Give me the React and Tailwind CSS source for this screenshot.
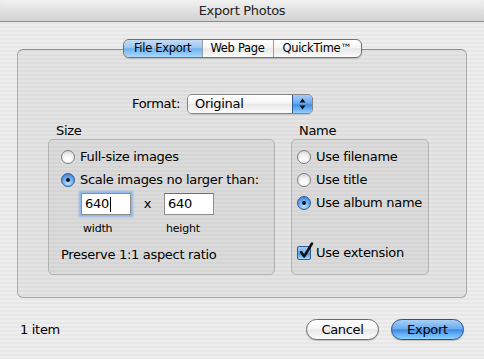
import React from 'react';

const STRIPES = 'bg-[image:repeating-linear-gradient(to_bottom,#eeeeee_0px,#eeeeee_2px,#e7e7e7_2px,#e7e7e7_4px)]';
const BLUE = 'bg-[image:linear-gradient(to_bottom,#c4dcf7_0%,#9cc7f3_45%,#6fb0ef_52%,#a9d9fd_100%)]';
const WHITE = 'bg-[image:linear-gradient(to_bottom,#ffffff_0%,#f6f6f6_45%,#e8e8e8_52%,#fbfbfb_100%)]';

function Radio({ on }) {
  return on ? (
    <span className="w-[14px] h-[14px] rounded-full border border-[#35588f] bg-[image:radial-gradient(circle_at_50%_75%,#bfe4ff_0%,#6fb0f0_45%,#2f74d0_100%)] flex items-center justify-center shrink-0">
      <span className="w-[4px] h-[4px] rounded-full bg-[#111]" />
    </span>
  ) : (
    <span className="w-[14px] h-[14px] rounded-full border border-[#7d7d7d] bg-[image:radial-gradient(circle_at_50%_75%,#ffffff_0%,#f4f4f4_45%,#c9c9c9_100%)] shrink-0" />
  );
}

function Checkbox() {
  return (
    <span className="relative w-[14px] h-[14px] rounded-[2px] border border-[#35588f] bg-[image:linear-gradient(to_bottom,#a8cdf5_0%,#6fb0ef_50%,#4f98e6_55%,#a9dcff_100%)] shrink-0">
      <svg className="absolute left-[1px] top-[-5px]" width="15" height="17" viewBox="0 0 15 17">
        <path d="M2 10 L5.2 14.5 L13 1.5" fill="none" stroke="#111" strokeWidth="2.5" strokeLinecap="round" strokeLinejoin="round" />
      </svg>
    </span>
  );
}

function Tab({ label, on, first, last }) {
  return (
    <div className={`h-full flex items-center justify-center text-[11.5px] tracking-[-0.3px] ${on ? BLUE : WHITE} ${first ? 'rounded-l-[6px]' : 'border-l border-[#9d9d9d]'} ${last ? 'rounded-r-[6px]' : ''}`}>
      {label}
    </div>
  );
}

function Row({ children, className = '' }) {
  return <div className={`h-[23px] flex items-center gap-[5px] ${className}`}>{children}</div>;
}

export default function App() {
  return (
    <div className={`w-[484px] h-[359px] overflow-hidden text-black font-['Lucida_Grande','DejaVu_Sans',sans-serif] text-[13px] tracking-[-0.3px] ${STRIPES}`}>
      {/* Title bar */}
      <div className="h-[22px] border-b border-[#8e8e8e] bg-[image:linear-gradient(to_bottom,#f1f1f1,#d2d2d2)] flex items-center justify-center text-[#222] rounded-t-[5px]">
        Export Photos
      </div>

      <div className="px-[17px] pt-[17px]">
        {/* Tabs */}
        <div className="relative z-10 flex justify-center -mb-[9px]">
          <div className="h-[19px] grid grid-cols-[78px_71px_88px] border border-[#707070] rounded-[6px] shadow-[0_1px_1px_rgba(0,0,0,0.15)]">
            <Tab label="File Export" on first />
            <Tab label="Web Page" />
            <Tab label="QuickTime™" last />
          </div>
        </div>

        {/* Tab box */}
        <div className="w-[450px] h-[249px] rounded-[6px] border border-[#a9a9a9] border-t-[#8c8c8c] bg-black/[0.04] pt-[44px]">
          <div className="flex items-center pl-[114px]">
            <span className="w-[55px]">Format:</span>
            <div className="w-[126px] h-[20px] rounded-[5px] border border-[#858585] flex overflow-hidden shadow-[0_1px_1px_rgba(0,0,0,0.12)]">
              <div className={`flex-1 flex items-center pl-[7px] ${WHITE}`}>Original</div>
              <div className="w-[20px] border-l border-[#35588f] flex items-center justify-center bg-[image:linear-gradient(to_bottom,#a6cbf5_0%,#6aaaf0_45%,#3f8ee8_55%,#8fd0ff_100%)]">
                <svg width="7" height="12" viewBox="0 0 7 12">
                  <path d="M3.5 0.5 L6.5 4.5 L0.5 4.5 Z M3.5 11.5 L6.5 7.5 L0.5 7.5 Z" fill="#111" />
                </svg>
              </div>
            </div>
          </div>

          <div className="flex pl-[30px] gap-[16px] mt-[9px]">
            {/* Size */}
            <div>
              <div className="h-[16px] leading-[15px] pl-[8px]">Size</div>
              <div className="w-[227px] h-[136px] rounded-[5px] border border-[#b3b3b3] bg-black/[0.035] pt-[5px]">
                <Row className="pl-[12px]"><Radio /><span>Full-size images</span></Row>
                <Row className="pl-[12px]"><Radio on /><span>Scale images no larger than:</span></Row>
                <div className="flex items-center pl-[32px] mt-[2px]">
                  <div className="w-[50px] h-[22px] bg-white border border-[#8e8e8e] flex items-center pl-[3px] shadow-[0_0_2px_2px_#8fb6e8]">
                    640<span className="w-px h-[15px] bg-black ml-[1px]" />
                  </div>
                  <div className="w-[33px] text-center">x</div>
                  <div className="w-[50px] h-[22px] bg-white border border-[#8e8e8e] border-t-[#6f6f6f] flex items-center pl-[3px]">640</div>
                </div>
                <div className="flex pl-[32px] mt-[7px] text-[11px] tracking-[-0.2px] leading-[13px]">
                  <div className="w-[83px] pl-[2px]">width</div>
                  <div className="pl-[2px]">height</div>
                </div>
                <div className="pl-[12px] mt-[10px]">Preserve 1:1 aspect ratio</div>
              </div>
            </div>

            {/* Name */}
            <div>
              <div className="h-[16px] leading-[15px] pl-[8px]">Name</div>
              <div className="w-[138px] h-[136px] rounded-[5px] border border-[#b3b3b3] bg-black/[0.035] pt-[5px] pl-[5px]">
                <Row><Radio /><span>Use filename</span></Row>
                <Row><Radio /><span>Use title</span></Row>
                <Row><Radio on /><span>Use album name</span></Row>
                <Row className="mt-[27px]"><Checkbox /><span>Use extension</span></Row>
              </div>
            </div>
          </div>
        </div>

        {/* Footer */}
        <div className="h-[21px] mt-[21px] flex items-center pl-[3px] pr-[3px]">
          <span className="flex-1">1 item</span>
          <button className={`w-[73px] h-[21px] rounded-full border border-[#6a6a6a] ${WHITE} shadow-[0_1px_1px_rgba(0,0,0,0.2)] flex items-center justify-center`}>
            Cancel
          </button>
          <button className="w-[73px] h-[21px] ml-[12px] rounded-full border border-[#2d4f8c] bg-[image:linear-gradient(to_bottom,#a9cff6_0%,#6eadf0_45%,#3d8de8_52%,#8ed2ff_100%)] shadow-[0_1px_1px_rgba(0,0,0,0.2)] flex items-center justify-center">
            Export
          </button>
        </div>
      </div>
    </div>
  );
}
